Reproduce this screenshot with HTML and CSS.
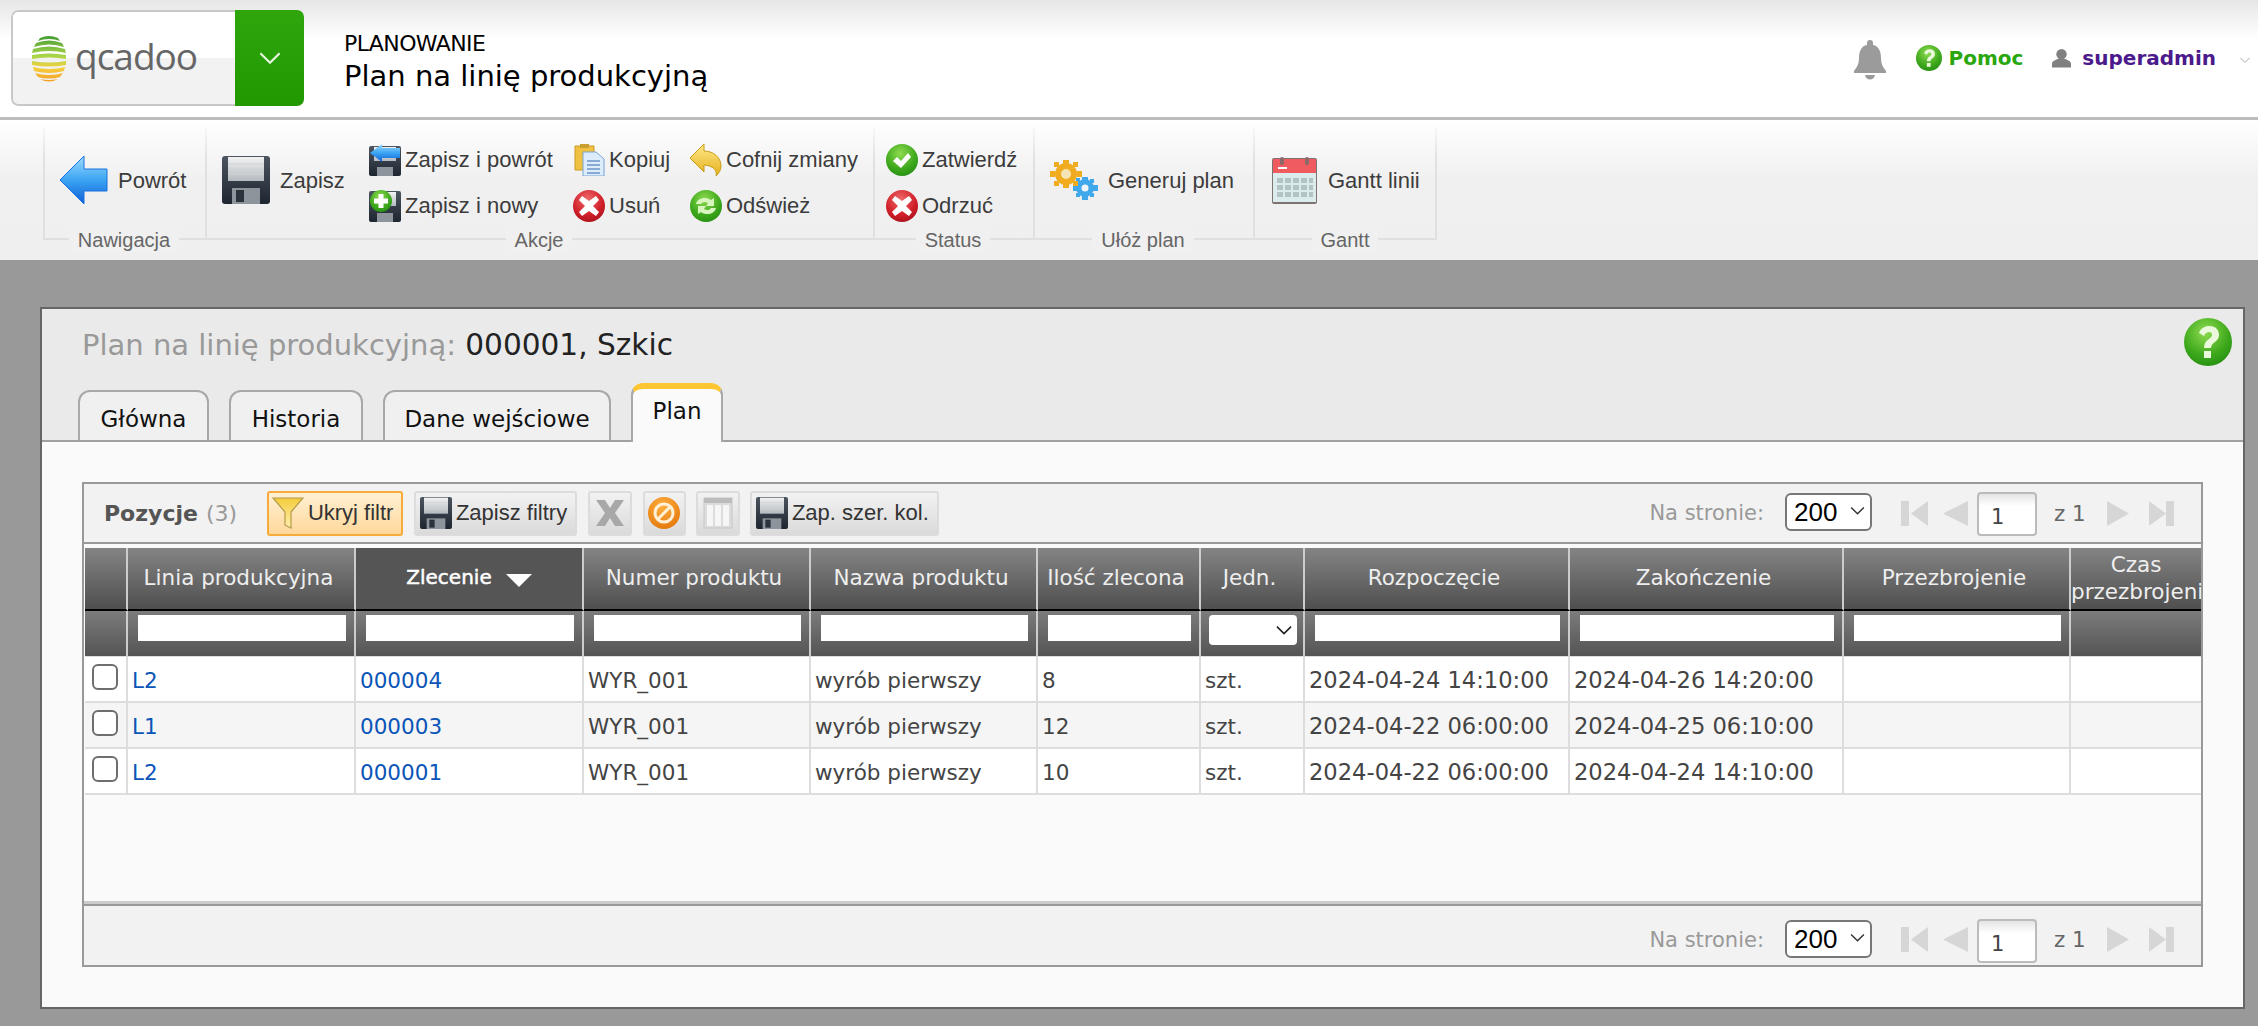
FILE: index.html
```html
<!DOCTYPE html>
<html lang="pl">
<head>
<meta charset="utf-8">
<title>Plan na linię produkcyjną</title>
<link rel="stylesheet" href="styles.css">
</head>
<body>
<svg class="defs" width="0" height="0" aria-hidden="true">
  <defs>
    <linearGradient id="gBlue" x1="0" y1="0" x2="0" y2="1"><stop offset="0" stop-color="#9fdcff"/><stop offset=".5" stop-color="#3ba4f2"/><stop offset="1" stop-color="#0f5fd8"/></linearGradient>
    <linearGradient id="gFloppy" x1="0" y1="0" x2="0" y2="1"><stop offset="0" stop-color="#4c5560"/><stop offset="1" stop-color="#1c2530"/></linearGradient>
    <linearGradient id="gLabel" x1="0" y1="0" x2="0" y2="1"><stop offset="0" stop-color="#f2f2f2"/><stop offset="1" stop-color="#b4bac0"/></linearGradient>
    <radialGradient id="gGreen" cx=".45" cy=".3" r=".8"><stop offset="0" stop-color="#8fdc50"/><stop offset=".6" stop-color="#3ea81c"/><stop offset="1" stop-color="#1f8a10"/></radialGradient>
    <radialGradient id="gRed" cx=".45" cy=".3" r=".8"><stop offset="0" stop-color="#f06a6a"/><stop offset=".6" stop-color="#d0202a"/><stop offset="1" stop-color="#a01018"/></radialGradient>
    <radialGradient id="gOrange" cx=".45" cy=".3" r=".8"><stop offset="0" stop-color="#ffb040"/><stop offset="1" stop-color="#e27308"/></radialGradient>
    <linearGradient id="gYellow" x1="0" y1="0" x2="0" y2="1"><stop offset="0" stop-color="#ffe98a"/><stop offset="1" stop-color="#e5b01c"/></linearGradient>
    <linearGradient id="gFunnel" x1="0" y1="0" x2="0" y2="1"><stop offset="0" stop-color="#f5cc3c"/><stop offset="1" stop-color="#fff0b0"/></linearGradient>
    <linearGradient id="gOrb" gradientUnits="userSpaceOnUse" x1="0" y1="0" x2="0" y2="47"><stop offset="0" stop-color="#3f9a33"/><stop offset=".45" stop-color="#a9d64a"/><stop offset=".7" stop-color="#f5d040"/><stop offset="1" stop-color="#f59a20"/></linearGradient>

    <symbol id="i-back" viewBox="0 0 48 48"><path d="M0 24 24 0v13h23v22H24v13z" fill="url(#gBlue)" stroke="#1a70e0" stroke-width="1"/></symbol>
    <symbol id="i-floppy" viewBox="0 0 48 48"><rect width="48" height="48" rx="3" fill="url(#gFloppy)"/><rect x="6" y="1" width="36" height="24" fill="url(#gLabel)"/><path d="M6 8h36M6 13h36M6 18h36" stroke="#cfd3d7" stroke-width="1"/><rect x="10" y="32" width="28" height="16" fill="#8d949b"/><rect x="14" y="34" width="8" height="12" fill="#2a323c"/></symbol>
    <symbol id="i-floppy-back" viewBox="0 0 32 32"><rect y="2" width="32" height="30" rx="2" fill="url(#gFloppy)"/><rect x="5" y="3" width="22" height="14" fill="url(#gLabel)"/><rect x="8" y="23" width="16" height="9" fill="#8d949b"/><path d="M1 9 13 0v4h18v10H13v4z" fill="url(#gBlue)"/></symbol>
    <symbol id="i-floppy-new" viewBox="0 0 32 32"><rect y="1" width="32" height="31" rx="2" fill="url(#gFloppy)"/><rect x="5" y="2" width="22" height="14" fill="url(#gLabel)"/><rect x="8" y="23" width="16" height="9" fill="#8d949b"/><circle cx="12" cy="11" r="11" fill="url(#gGreen)"/><path d="M9.500 4h5v4.500H19v5h-4.500V18h-5v-4.500H5v-5h4.500z" fill="#fff"/></symbol>
    <symbol id="i-copy" viewBox="0 0 32 32"><path d="M2 2h19v24H2z" fill="#f0c040" stroke="#c89a20"/><path d="M7 0h9v4H7z" fill="#c9a030"/><path d="M10 8h13l8 7v17H10z" fill="#dcecfa" stroke="#7aa4d0"/><path d="M14 17h13M14 21h13M14 25h13M14 29h13" stroke="#6a94c8" stroke-width="1.300"/></symbol>
    <symbol id="i-x" viewBox="0 0 32 32"><circle cx="16" cy="16" r="16" fill="url(#gRed)"/><path d="m9 6 7 5 7-5 3 4-6 6 6 6-3 4-7-5-7 5-3-4 6-6-6-6z" fill="#fff"/></symbol>
    <symbol id="i-undo" viewBox="0 0 32 32"><path d="M14 0v7c10 0 17 7 17 15 0 4-2 7-5 10 1-3 0-10-12-11v7L0 14z" fill="url(#gYellow)" stroke="#c89c18"/></symbol>
    <symbol id="i-refresh" viewBox="0 0 32 32"><circle cx="16" cy="16" r="16" fill="url(#gGreen)"/><path d="M6 14c1-6 10-8 15-4l3-2v8h-8l2-3c-3-2-6-1-7 1zM26 18c-1 6-10 8-15 4l-3 2v-8h8l-2 3c3 2 6 1 7-1z" fill="#d8f5c0"/></symbol>
    <symbol id="i-check" viewBox="0 0 32 32"><circle cx="16" cy="16" r="16" fill="url(#gGreen)"/><path d="m7 17 4-4 4 4 7-8 3 4-10 11z" fill="#fff"/></symbol>
    <symbol id="i-gears" viewBox="0 0 48 40"><g fill="#42a8ec"><circle cx="35" cy="28" r="9"/><path d="M32 17h6v4h-6zM32 35h6v5h-6zM23 25h4v6h-4zM43 25h5v6h-5zM26 18l4 0 0 4-4 0zM40 33h4v4h-4zM40 19h4v4h-4zM26 33h4v4h-4z"/></g><circle cx="35" cy="28" r="3.500" fill="#eef4fa"/><g fill="#f0ac1e"><circle cx="16" cy="14" r="11"/><path d="M13 0h6v5h-6zM13 23h6v5h-6zM0 11h5v6H0zM27 11h5v6h-5zM4 2h5v5H4zM23 21h5v5h-5zM23 2h5v5h-5zM4 21h5v5H4z"/></g><circle cx="16" cy="14" r="5" fill="#f7e4b6"/></symbol>
    <symbol id="i-cal" viewBox="0 0 45 47"><rect y="1" width="45" height="46" rx="2" fill="#7b7472"/><rect x="1" y="2" width="43" height="14" fill="#ef5b5f"/><rect x="1" y="16" width="43" height="29" fill="#dcecec"/><rect x="8" y="0" width="4" height="8" rx="2" fill="#8a6a6a"/><rect x="33" y="0" width="4" height="8" rx="2" fill="#8a6a6a"/><path d="M6 11h9" stroke="#fff" stroke-width="2"/><g fill="#b2c4c4"><rect x="5" y="21" width="6" height="5"/><rect x="13" y="21" width="6" height="5"/><rect x="21" y="21" width="6" height="5"/><rect x="29" y="21" width="6" height="5"/><rect x="37" y="21" width="4" height="5"/><rect x="5" y="28" width="6" height="5"/><rect x="13" y="28" width="6" height="5"/><rect x="21" y="28" width="6" height="5"/><rect x="29" y="28" width="6" height="5"/><rect x="37" y="28" width="4" height="5"/><rect x="5" y="35" width="6" height="5"/><rect x="13" y="35" width="6" height="5"/><rect x="21" y="35" width="6" height="5"/><rect x="29" y="35" width="6" height="5"/><rect x="37" y="35" width="4" height="5"/></g></symbol>
    <symbol id="i-funnel" viewBox="0 0 32 32"><path d="M1 1h30L19 15v16l-6-3V15z" fill="url(#gFunnel)" stroke="#b39a4a" stroke-width="1.200"/></symbol>
    <symbol id="i-del" viewBox="0 0 32 32"><path d="M2 3h9l5 8 5-8h9L21 16l9 13h-9l-5-8-5 8H2l9-13z" fill="#a8a8a8"/></symbol>
    <symbol id="i-no" viewBox="0 0 32 32"><circle cx="16" cy="16" r="16" fill="url(#gOrange)"/><circle cx="16" cy="16" r="9" fill="none" stroke="#fff0d8" stroke-width="3"/><path d="m9 23 14-14" stroke="#fff0d8" stroke-width="3"/></symbol>
    <symbol id="i-cols" viewBox="0 0 32 32"><rect x="2" y="1" width="28" height="30" fill="#dcdcdc" stroke="#c6c6c6"/><rect x="2" y="1" width="28" height="5" fill="#bcbcbc"/><rect x="5" y="8" width="6" height="21" fill="#f6f6f6"/><rect x="13" y="8" width="6" height="21" fill="#f6f6f6"/><rect x="21" y="8" width="6" height="21" fill="#f6f6f6"/></symbol>
    <symbol id="i-first" viewBox="0 0 27 25"><path d="M0 0h8v25H0zM27 0v25L10 12.500z" fill="#d6d6d6"/></symbol>
    <symbol id="i-prev" viewBox="0 0 25 25"><path d="M25 0v25L0 12.500z" fill="#d6d6d6"/></symbol>
    <symbol id="i-next" viewBox="0 0 22 25"><path d="M0 0v25l22-12.500z" fill="#d6d6d6"/></symbol>
    <symbol id="i-last" viewBox="0 0 25 25"><path d="M0 0v25l17-12.500zM17 0h8v25h-8z" fill="#d6d6d6"/></symbol>
    <symbol id="i-help" viewBox="0 0 48 48"><circle cx="24" cy="24" r="24" fill="url(#gGreen)"/><path d="M15 15c2-5 6-7 10-7 7 0 10 4 10 9 0 7-8 7-8 13h-7c0-9 8-9 8-13 0-2-1-3-3-3s-4 1-5 4zM20 33h7v7h-7z" fill="#eaf8dc"/></symbol>
    <symbol id="i-chev" viewBox="0 0 20 14"><path d="M1 2l9 9 9-9" fill="none" stroke="currentColor" stroke-width="2"/></symbol>
  </defs>
</svg>

<header class="topbar">
  <div class="brand">
    <div class="brand-logo">
      <svg class="orb" viewBox="0 0 34 47"><path fill="url(#gOrb)" d="M8 3Q17-1 26 3l2 3Q17 2 6 6zM4 8Q17 3 30 8l2 4Q17 7 2 12zM1 14Q17 9 33 14l1 4Q17 14 0 18zM0 20q17-3 34 0v4q-17-3-34 0zM0 26q17 3 34 0v4q-17 3-34 0zM1 32q16 4 32 0l-1 4q-15 4-30 0zM3 38q14 4 28 0l-3 4q-11 3-22 0zM8 44q9 2 18 0q-9 5-18 0z"/></svg>
      <span class="brand-name">qcadoo</span>
    </div>
    <div class="brand-menu"><svg class="brand-chev" viewBox="0 0 20 14"><use href="#i-chev"/></svg></div>
  </div>
  <div class="page-id">
    <div class="page-module">PLANOWANIE</div>
    <div class="page-title">Plan na linię produkcyjną</div>
  </div>
  <div class="top-right">
    <svg class="bell" viewBox="0 0 32 40"><path d="M16 0a3 3 0 0 1 3 3v2c6 1 8 7 8 13 0 6 2 9 5 13v2H0v-2c3-4 5-7 5-13 0-6 2-12 8-13V3a3 3 0 0 1 3-3zM11 35h10c-1 6-9 6-10 0z" fill="#9b9b9b"/></svg>
    <svg class="help-small" viewBox="0 0 48 48"><use href="#i-help"/></svg>
    <a class="help-link">Pomoc</a>
    <svg class="person" viewBox="0 0 20 20"><circle cx="10" cy="6" r="5.500" fill="#808080"/><path d="M0 20v-4c0-3 4-4 6-5h8c2 1 6 2 6 5v4z" fill="#808080"/></svg>
    <a class="user-link">superadmin</a>
    <svg class="user-chev" viewBox="0 0 20 14"><use href="#i-chev"/></svg>
  </div>
</header>

<nav class="ribbon">
  <section class="rgroup w-nav">
    <div class="rbody">
      <a class="btn-big"><svg class="ico48" viewBox="0 0 48 48"><use href="#i-back"/></svg><span>Powrót</span></a>
    </div>
    <div class="rfoot"><span>Nawigacja</span></div>
  </section>
  <section class="rgroup w-act">
    <div class="rbody">
      <a class="btn-big act-save"><svg class="ico48" viewBox="0 0 48 48"><use href="#i-floppy"/></svg><span>Zapisz</span></a>
      <div class="stack s1">
        <a class="btn-sm"><svg class="ico32" viewBox="0 0 32 32"><use href="#i-floppy-back"/></svg><span>Zapisz i powrót</span></a>
        <a class="btn-sm"><svg class="ico32" viewBox="0 0 32 32"><use href="#i-floppy-new"/></svg><span>Zapisz i nowy</span></a>
      </div>
      <div class="stack s2">
        <a class="btn-sm"><svg class="ico32" viewBox="0 0 32 32"><use href="#i-copy"/></svg><span>Kopiuj</span></a>
        <a class="btn-sm"><svg class="ico32" viewBox="0 0 32 32"><use href="#i-x"/></svg><span>Usuń</span></a>
      </div>
      <div class="stack s3">
        <a class="btn-sm"><svg class="ico32" viewBox="0 0 32 32"><use href="#i-undo"/></svg><span>Cofnij zmiany</span></a>
        <a class="btn-sm"><svg class="ico32" viewBox="0 0 32 32"><use href="#i-refresh"/></svg><span>Odśwież</span></a>
      </div>
    </div>
    <div class="rfoot"><span>Akcje</span></div>
  </section>
  <section class="rgroup w-status">
    <div class="rbody">
      <div class="stack s4">
        <a class="btn-sm"><svg class="ico32" viewBox="0 0 32 32"><use href="#i-check"/></svg><span>Zatwierdź</span></a>
        <a class="btn-sm"><svg class="ico32" viewBox="0 0 32 32"><use href="#i-x"/></svg><span>Odrzuć</span></a>
      </div>
    </div>
    <div class="rfoot"><span>Status</span></div>
  </section>
  <section class="rgroup w-plan">
    <div class="rbody">
      <a class="btn-big"><svg class="ico-gears" viewBox="0 0 48 40"><use href="#i-gears"/></svg><span>Generuj plan</span></a>
    </div>
    <div class="rfoot"><span>Ułóż plan</span></div>
  </section>
  <section class="rgroup w-gantt">
    <div class="rbody">
      <a class="btn-big"><svg class="ico-cal" viewBox="0 0 45 47"><use href="#i-cal"/></svg><span>Gantt linii</span></a>
    </div>
    <div class="rfoot"><span>Gantt</span></div>
  </section>
</nav>

<main class="desk">
  <div class="window">
    <svg class="help-big" viewBox="0 0 48 48"><use href="#i-help"/></svg>
    <div class="win-head">
      <h1 class="win-title">Plan na linię produkcyjną: <b>000001, Szkic</b></h1>
      <div class="tabs">
        <a class="tab t1">Główna</a>
        <a class="tab t2">Historia</a>
        <a class="tab t3">Dane wejściowe</a>
        <a class="tab t4 active">Plan</a>
      </div>
    </div>
    <div class="win-body">
      <div class="panel">
        <div class="p-tools">
          <span class="p-name">Pozycje</span><span class="p-count">(3)</span>
          <a class="tbtn on b1"><svg class="tico" viewBox="0 0 32 32"><use href="#i-funnel"/></svg>Ukryj filtr</a>
          <a class="tbtn b2"><svg class="tico" viewBox="0 0 48 48"><use href="#i-floppy"/></svg>Zapisz filtry</a>
          <a class="tbtn sq"><svg class="tico" viewBox="0 0 32 32"><use href="#i-del"/></svg></a>
          <a class="tbtn sq s-no"><svg class="tico" viewBox="0 0 32 32"><use href="#i-no"/></svg></a>
          <a class="tbtn sq s-cols"><svg class="tico" viewBox="0 0 32 32"><use href="#i-cols"/></svg></a>
          <a class="tbtn b3"><svg class="tico" viewBox="0 0 48 48"><use href="#i-floppy"/></svg>Zap. szer. kol.</a>
          <div class="pager">
            <span class="pg-label">Na stronie:</span>
            <div class="sel-wrap"><select class="pg-sel"><option>200</option></select><svg class="sel-chev" viewBox="0 0 20 14"><use href="#i-chev"/></svg></div>
            <svg class="pg-i pg-first" viewBox="0 0 27 25"><use href="#i-first"/></svg>
            <svg class="pg-i pg-prev" viewBox="0 0 25 25"><use href="#i-prev"/></svg>
            <input class="pg-num" value="1">
            <span class="pg-of">z 1</span>
            <svg class="pg-i pg-next" viewBox="0 0 22 25"><use href="#i-next"/></svg>
            <svg class="pg-i pg-last" viewBox="0 0 25 25"><use href="#i-last"/></svg>
          </div>
        </div>
        <div class="grid-wrap">
          <table class="grid">
            <colgroup>
              <col class="c0"><col class="c1"><col class="c2"><col class="c3"><col class="c4"><col class="c5"><col class="c6"><col class="c7"><col class="c8"><col class="c9"><col class="c10">
            </colgroup>
            <thead>
              <tr class="hrow">
                <th></th>
                <th>Linia produkcyjna</th>
                <th class="sorted">Zlecenie<i class="sort-tri"></i></th>
                <th>Numer produktu</th>
                <th>Nazwa produktu</th>
                <th>Ilość zlecona</th>
                <th>Jedn.</th>
                <th>Rozpoczęcie</th>
                <th>Zakończenie</th>
                <th>Przezbrojenie</th>
                <th class="two"><div class="clip">Czas przezbrojenia</div></th>
              </tr>
              <tr class="frow">
                <th></th>
                <th><input class="f-in"></th>
                <th><input class="f-in"></th>
                <th><input class="f-in"></th>
                <th><input class="f-in"></th>
                <th><input class="f-in"></th>
                <th><div class="f-sel"><svg class="f-chev" viewBox="0 0 20 14"><use href="#i-chev"/></svg></div></th>
                <th><input class="f-in"></th>
                <th><input class="f-in"></th>
                <th><input class="f-in"></th>
                <th></th>
              </tr>
            </thead>
            <tbody>
              <tr>
                <td><input type="checkbox" class="chk"></td><td><a class="lnk">L2</a></td><td><a class="lnk">000004</a></td><td>WYR_001</td><td>wyrób pierwszy</td><td>8</td><td>szt.</td><td class="dt">2024-04-24 14:10:00</td><td class="dt">2024-04-26 14:20:00</td><td></td><td></td>
              </tr>
              <tr class="alt">
                <td><input type="checkbox" class="chk"></td><td><a class="lnk">L1</a></td><td><a class="lnk">000003</a></td><td>WYR_001</td><td>wyrób pierwszy</td><td>12</td><td>szt.</td><td class="dt">2024-04-22 06:00:00</td><td class="dt">2024-04-25 06:10:00</td><td></td><td></td>
              </tr>
              <tr>
                <td><input type="checkbox" class="chk"></td><td><a class="lnk">L2</a></td><td><a class="lnk">000001</a></td><td>WYR_001</td><td>wyrób pierwszy</td><td>10</td><td>szt.</td><td class="dt">2024-04-22 06:00:00</td><td class="dt">2024-04-24 14:10:00</td><td></td><td></td>
              </tr>
            </tbody>
          </table>
        </div>
        <div class="p-foot">
          <div class="pager">
            <span class="pg-label">Na stronie:</span>
            <div class="sel-wrap"><select class="pg-sel"><option>200</option></select><svg class="sel-chev" viewBox="0 0 20 14"><use href="#i-chev"/></svg></div>
            <svg class="pg-i pg-first" viewBox="0 0 27 25"><use href="#i-first"/></svg>
            <svg class="pg-i pg-prev" viewBox="0 0 25 25"><use href="#i-prev"/></svg>
            <input class="pg-num" value="1">
            <span class="pg-of">z 1</span>
            <svg class="pg-i pg-next" viewBox="0 0 22 25"><use href="#i-next"/></svg>
            <svg class="pg-i pg-last" viewBox="0 0 25 25"><use href="#i-last"/></svg>
          </div>
        </div>
      </div>
    </div>
  </div>
</main>
</body>
</html>
```

FILE: styles.css
```css
* { box-sizing: border-box; }
html, body { margin: 0; padding: 0; height: 100%; overflow: hidden; }
body { width: 2258px; height: 1026px; background: #999; font-family: "DejaVu Sans", sans-serif; color: #000; display: flex; flex-direction: column; }
.defs { position: absolute; }
a { text-decoration: none; }

/* top bar */
.topbar { height: 120px; flex: none; display: flex; align-items: flex-start; background: linear-gradient(#e6e6e6 0, #fbfbfb 32px, #fff 40px); border-bottom: 3px solid #bcbcbc; }
.brand { margin: 10px 0 0 11px; width: 293px; height: 96px; display: flex; border-radius: 7px; overflow: hidden; }
.brand-logo { width: 224px; display: flex; align-items: center; padding-left: 19px; border: 2px solid #c8c8c8; border-right: 0; border-radius: 7px 0 0 7px; background: linear-gradient(#fff 0, #fff 50%, #f2f2f2 50%, #f2f2f2 100%); }
.orb { width: 34px; height: 47px; flex: none; }
.brand-name { margin-left: 9px; font: 37px "Open Sans", sans-serif; letter-spacing: -1px; color: #666; line-height: 1; position: relative; top: -3px; }
.brand-menu { width: 69px; background: linear-gradient(#2ea60c, #219800); display: flex; align-items: center; justify-content: center; }
.brand-chev { width: 22px; height: 15px; color: #e8f5e0; }
.page-id { margin: 31px 0 0 40px; }
.page-module { font-size: 22px; line-height: 26px; letter-spacing: -.6px; }
.page-title { font-size: 29px; line-height: 36px; margin-top: 1px; }
.top-right { margin-left: auto; margin-top: 40px; display: flex; align-items: center; padding-right: 8px; }
.bell { width: 32px; height: 40px; margin-right: 30px; }
.help-small { width: 26px; height: 26px; margin-right: 7px; }
.help-link { color: #2aa70f; font-weight: 700; font-size: 20px; margin-right: 29px; margin-top: -5px; }
.person { width: 19px; height: 20px; margin-right: 11px; }
.user-link { color: #4b1a8c; font-weight: 700; font-size: 20px; margin-right: 24px; margin-top: -5px; }
.user-chev { width: 10px; height: 7px; color: #aaa; }
.help-small, .person { margin-top: -4px; }

/* ribbon */
.ribbon { height: 140px; flex: none; display: flex; padding: 8px 0 0 43px; background: linear-gradient(#fff 0, #f0f0f0 60px, #efefef 100%); }
.rgroup { display: flex; flex-direction: column; }
.rbody { height: 112px; display: flex; align-items: flex-start; border-style: solid; border-width: 0 0 2px 2px; border-image: linear-gradient(#f8f8f8, #e0e0e0 30%) 1; padding-left: 15px; font: 22px "Liberation Sans", sans-serif; color: #3c3c3c; }
.rfoot { height: 26px; margin-top: -13px; display: flex; align-items: center; font: 20px "Liberation Sans", sans-serif; color: #666; justify-content: center; }
.rfoot span { background: #f0f0f0; padding: 0 9px; line-height: 26px; }
.w-nav { width: 162px; }
.w-act { width: 668px; }
.w-status { width: 160px; }
.w-plan { width: 220px; }
.w-gantt { width: 184px; }
.w-gantt .rbody { border-width: 0 2px 2px 2px; }
.btn-big { display: flex; align-items: center; gap: 10px; margin-top: 28px; height: 48px; color: inherit; }
.btn-big span { padding-top: 2px; }
.ico48 { width: 48px; height: 48px; flex: none; }
.ico-gears { width: 48px; height: 40px; flex: none; }
.ico-cal { width: 45px; height: 47px; flex: none; }
.w-gantt .btn-big { gap: 11px; }
.stack { padding-top: 9px; display: flex; flex-direction: column; flex: none; }
.btn-sm { height: 46px; display: flex; align-items: center; gap: 4px; color: inherit; }
.ico32 { width: 32px; height: 32px; flex: none; }
.act-save { width: 147px; flex: none; }
.s1 { width: 204px; }
.s2 { width: 117px; }
.w-status .rbody { padding-left: 11px; }
.w-plan .rbody { padding-left: 15px; }
.w-gantt .rbody { padding-left: 17px; }

/* window */
.desk { flex: 1; padding: 47px 13px 17px 40px; min-height: 0; }
.window { position: relative; height: 702px; border: 2px solid #666; display: flex; flex-direction: column; background: #fafafa; }
.help-big { position: absolute; right: 11px; top: 9px; width: 48px; height: 48px; }
.win-head { height: 133px; flex: none; background: #eaeaea; border-bottom: 2px solid #a0a0a0; padding: 0 0 0 36px; }
.win-title { margin: 0; font-weight: 400; font-size: 29px; color: #999; line-height: 36px; padding: 18px 0 0 4px; height: 75px; }
.win-title b { font-weight: 400; color: #222; font-size: 29.600px; }
.tabs { display: flex; align-items: flex-end; height: 56px; }
.tab { height: 50px; border: 2px solid #a8a8a8; border-bottom: 0; border-radius: 12px 12px 0 0; display: flex; align-items: center; justify-content: center; font-size: 23px; color: #111; background: #f0f0f0; margin-right: 20px; padding-top: 5px; flex: none; }
.t1 { width: 131px; }
.t2 { width: 134px; }
.t3 { width: 228px; }
.t4 { width: 92px; }
.active { height: 59px; background: #fafafa; border-top: 6px solid #fdc632; margin-bottom: -2px; padding: 0 0 10px; }

.win-body { flex: 1; padding: 40px 40px 0 40px; }
.panel { width: 2121px; height: 485px; border: 2px solid #999; display: flex; flex-direction: column; background: #fafafa; }
.p-tools { height: 60px; flex: none; background: #f2f2f2; display: flex; align-items: center; padding-left: 20px; border-bottom: 2px solid #999; }
.p-name { font-weight: 700; font-size: 22px; color: #555; }
.p-count { font-size: 22px; color: #999; margin-left: 8px; width: 61px; }
.tbtn { height: 45px; display: flex; align-items: center; border-radius: 3px; border: 2px solid #dcdcdc; background: linear-gradient(#f2f2f2, #dadada); font: 22px "Liberation Sans", sans-serif; color: #333; margin-right: 11px; flex: none; }
.on { width: 136px; background: linear-gradient(#fff0d4, #ffd89a); border-color: #f6ab3a; padding-left: 3px; }
.b2 { width: 163px; padding-left: 4px; }
.b3 { width: 189px; padding-left: 4px; }
.sq { width: 44px; justify-content: center; }
.s-no { width: 43px; margin-right: 10px; }
.s-cols { margin-right: 10px; }
.tico { width: 32px; height: 32px; margin-right: 4px; flex: none; }
.sq .tico { margin-right: 0; }
.pager { margin-left: auto; display: flex; align-items: center; padding-right: 27px; }
.pg-label { font-size: 21px; color: #999; margin-right: 21px; }
.sel-wrap { position: relative; width: 87px; height: 38px; margin: -2px 29px 0 0; }
.pg-sel { appearance: none; width: 100%; height: 100%; border: 2px solid #777; border-radius: 6px; background: #fff; font: 26px "Liberation Sans", sans-serif; color: #000; padding: 0 0 0 7px; }
.sel-chev { position: absolute; right: 7px; top: 13px; width: 15px; height: 10px; color: #333; pointer-events: none; }
.pg-i { height: 25px; flex: none; }
.pg-first { width: 27px; margin-right: 15px; }
.pg-prev { width: 25px; margin-right: 9px; }
.pg-num { width: 60px; height: 44px; border: 2px solid #bbb; border-radius: 4px; font: 21px "DejaVu Sans", sans-serif; color: #444; padding: 6px 0 0 12px; margin: 2px 17px 0 0; background: linear-gradient(#e4e4e4, #fff 12px); }
.pg-of { font-size: 21.500px; color: #666; width: 53px; }
.pg-next { width: 22px; margin-right: 20px; }
.pg-last { width: 25px; }

.grid-wrap { height: 360px; flex: none; padding: 4px 0 0 1px; border-bottom: 3px solid #ccc; background: #fafafa; }
.grid { table-layout: fixed; width: 2116px; border-collapse: separate; border-spacing: 0; }
.c0 { width: 43px; } .c1 { width: 228px; } .c2 { width: 228px; } .c3 { width: 227px; } .c4 { width: 227px; } .c5 { width: 163px; } .c6 { width: 104px; } .c7 { width: 265px; } .c8 { width: 274px; } .c9 { width: 227px; } .c10 { width: 130px; }
.hrow th { height: 63px; background: linear-gradient(#848484, #4f4f4f); border-right: 2px solid #ccc; border-bottom: 2px solid #000; font-weight: 400; font-size: 21.500px; color: #eee; padding: 0 5px 2px 0; overflow: hidden; line-height: 27px; }
.hrow th.two { padding: 0 0 2px 0; }
.hrow th:last-child, .frow th:last-child { border-right: 0; }
.hrow .sorted { background: #555; color: #fff; font-size: 20px; -webkit-text-stroke: .5px #fff; padding-right: 0; }
.sort-tri { display: inline-block; margin-left: 14px; border-left: 13px solid transparent; border-right: 13px solid transparent; border-top: 13px solid #fff; vertical-align: -3px; }
.clip { width: 100%; }
.frow th { height: 46px; background: linear-gradient(#7c7c7c, #545454); border-right: 2px solid #ccc; border-bottom: 1px solid #ddd; padding: 4px 8px 0 10px; vertical-align: top; }
.f-in { display: block; width: 100%; height: 26px; border: 0; background: #fff; padding: 0; }
.f-sel { margin: 0 -2px 0 -2px; height: 30px; background: #fff; border-radius: 4px; display: flex; justify-content: flex-end; align-items: center; padding-right: 5px; }
.f-chev { width: 16px; height: 11px; color: #222; }
tbody td { height: 46px; border-right: 2px solid #ddd; border-bottom: 2px solid #ddd; background: #fff; font-size: 21.500px; color: #444; padding: 2px 0 0 4px; white-space: nowrap; overflow: hidden; }
tbody td.dt { font-size: 22.600px; }
tbody td:last-child { border-right: 0; }
tbody td:first-child { padding: 0; }
tbody .alt td { background: #f5f5f5; }
.lnk { color: #0b55b8; }
.chk { appearance: none; display: block; width: 26px; height: 26px; margin: 0 0 4px 7px; border: 2px solid #6e6e6e; border-radius: 6px; background: #fff; }
.p-foot { flex: 1; background: #f2f2f2; display: flex; align-items: center; border-top: 2px solid #999; padding-top: 8px; }
```
